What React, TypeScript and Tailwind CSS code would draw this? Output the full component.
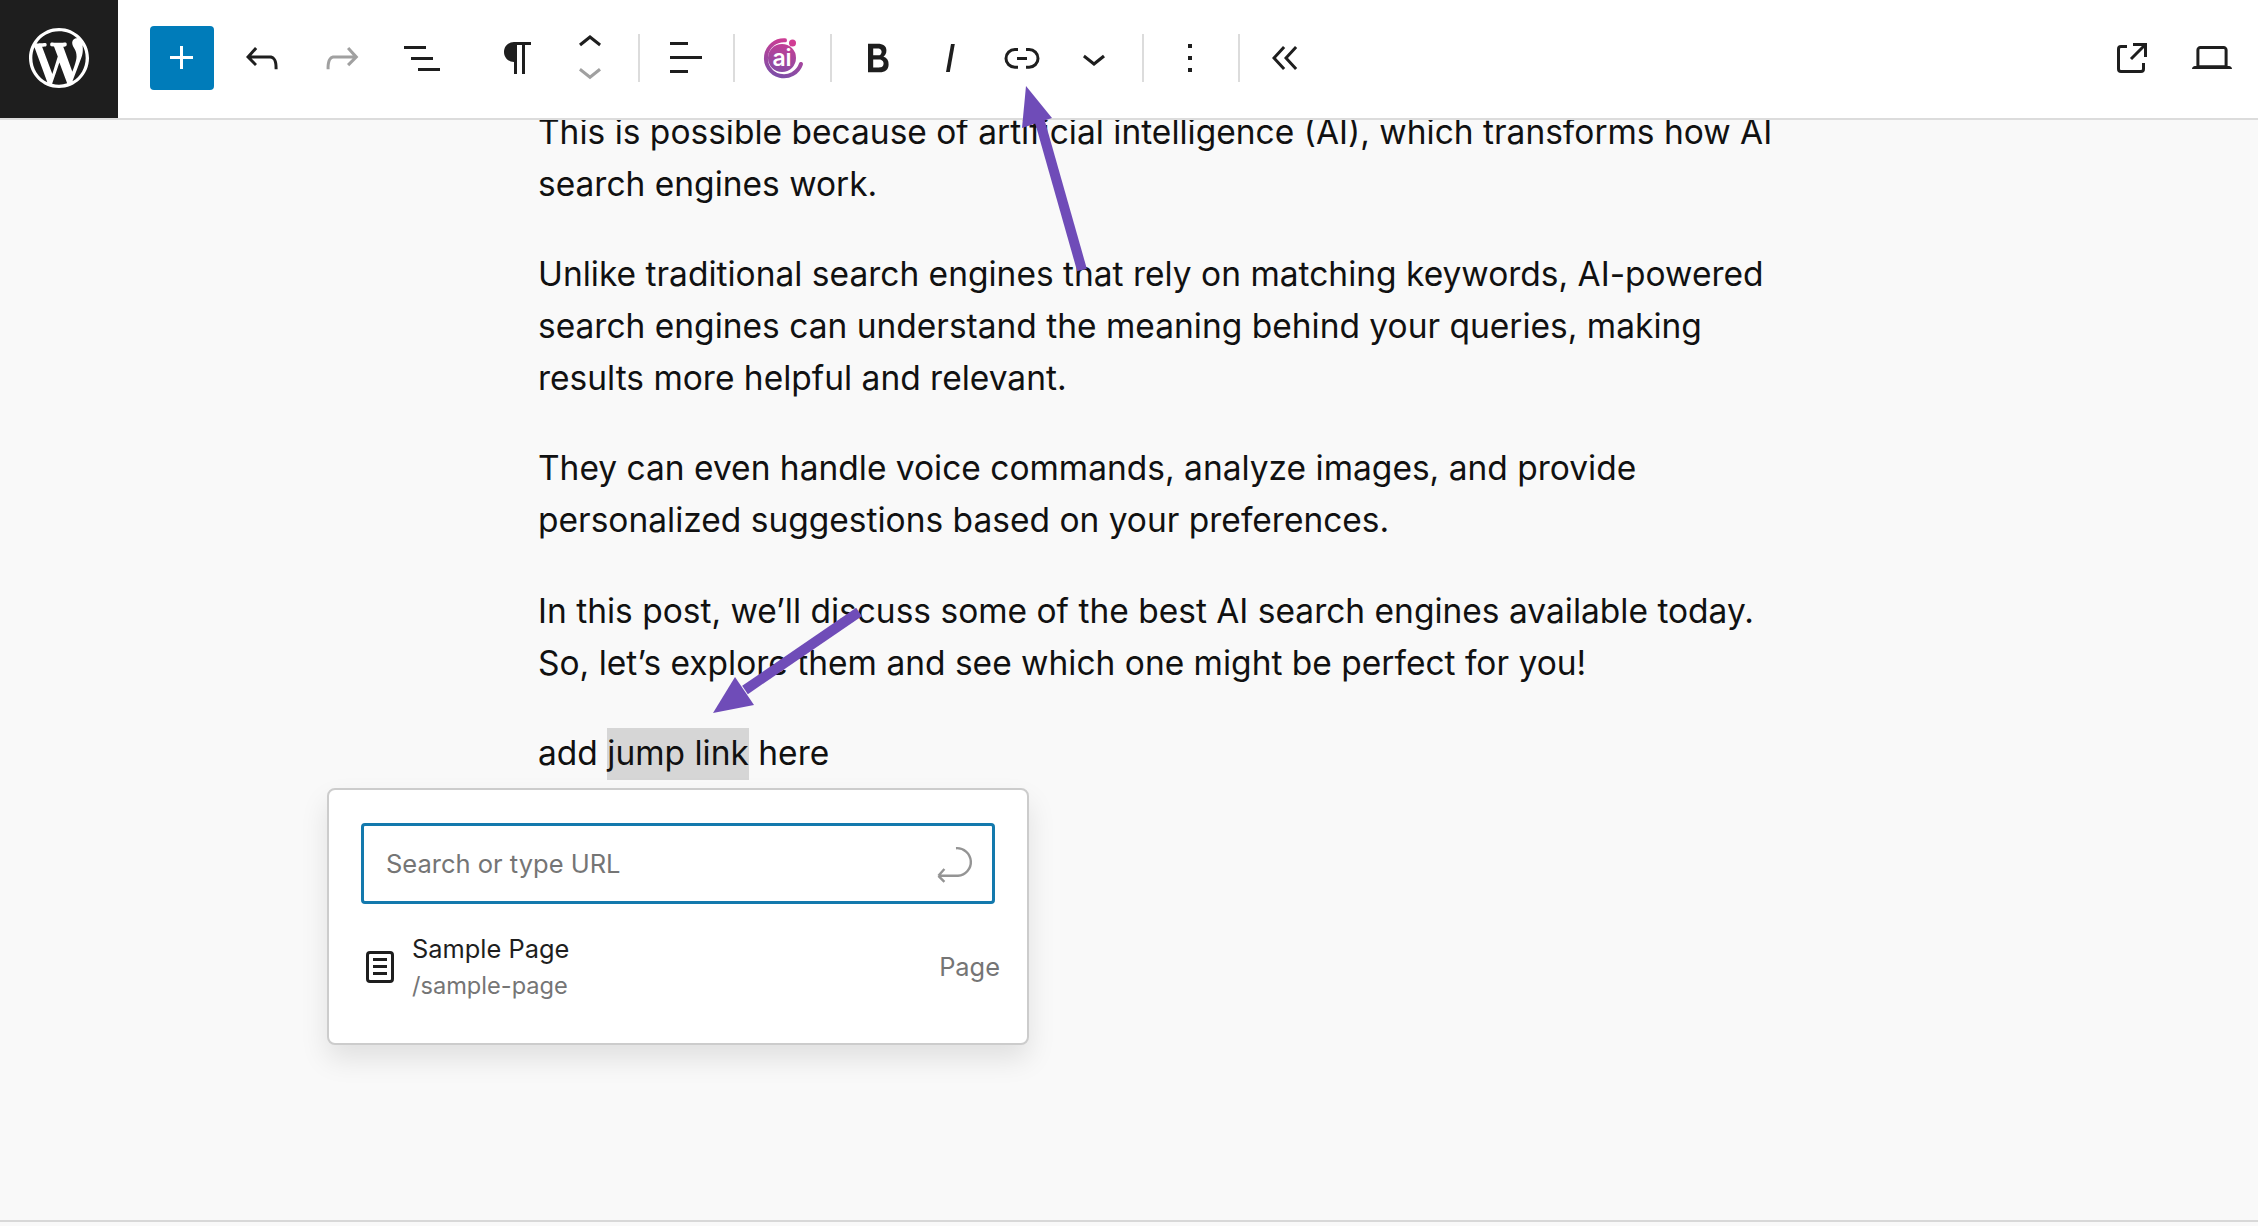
const PATHS = {
  plus: "M11 12.5V17.5H12.5V12.5H17.5V11H12.5V6H11V11H6V12.5H11Z",
  undo: "M18.3 11.7c-.6-.6-1.4-.9-2.3-.9H6.7l2.9-3.3-1.1-1-4.5 5L8.5 16l1-1-2.7-2.7H16c.5 0 .9.2 1.3.5 1 1 1 3.4 1 4.5v.3h1.5v-.2c0-1.5 0-4.3-1.5-5.7z",
  redo: "M15.6 6.5l-1.1 1 2.9 3.3H8c-.9 0-1.7.3-2.3.9-1.4 1.5-1.4 4.2-1.4 5.7v.2h1.5v-.3c0-1.1 0-3.5 1-4.5.3-.3.7-.5 1.3-.5h9.2L14.5 15l1.1 1.1 4.6-4.6-4.6-5z",
  list: "M3 6h11v1.5H3V6Zm3.5 5.5h11V13h-11v-1.5ZM21 17H10v1.5h11V17Z",
  para: "m9.99609 14v-.2251l.00391.0001v6.225h1.5v-14.5h2.5v14.5h1.5v-14.5h3v-1.5h-8.50391c-2.76142 0-5 2.23858-5 5 0 2.7614 2.23858 5 5 5z",
  align: "M13 5.5H4V4h9v1.5Zm7 7H4V11h16v1.5Zm-7 7H4V18h9v1.5Z",
  bold: "M14.7 11.3c1-.6 1.5-1.6 1.5-3 0-2.3-1.5-3.4-4.5-3.4H7v14.2h5.8c1.4 0 2.5-.3 3.3-1 .8-.7 1.2-1.7 1.2-2.9.1-1.9-.8-3.3-2.6-3.9zm-5.1-4h2.3c.6 0 1.1.1 1.4.4.3.3.5.7.5 1.2s-.2 1-.5 1.3c-.3.3-.8.4-1.4.4H9.6V7.3zm4.6 9c-.4.3-1 .4-1.7.4H9.6v-3.9h2.9c.7 0 1.3.2 1.7.6.4.4.6.8.6 1.4 0 .6-.2 1.1-.6 1.5z",
  italic: "M12.5 5L10 19h1.9l2.5-14z",
  link: "M10 17.389H8.444A5.194 5.194 0 1 1 8.444 7H10v1.5H8.444a3.694 3.694 0 0 0 0 7.389H10v1.5ZM14 7h1.556a5.194 5.194 0 0 1 0 10.39H14v-1.5h1.556a3.694 3.694 0 0 0 0-7.39H14V7Zm-4.5 6h5v-1.5h-5V13Z",
  down: "M17.5 11.6L12 16l-5.5-4.4.9-1.2L12 14l4.5-3.6 1 1.2z",
  up: "M6.5 12.4L12 8l5.5 4.4-.9 1.2L12 10l-4.5 3.6-1-1.2z",
  more: "M13 19h-2v-2h2v2zm0-6h-2v-2h2v2zm0-6h-2V5h2v2z",
  collapse: "M11.6 7l-1.1-1L5 12l5.5 6 1.1-1L7 12l4.6-5zm6 0l-1.1-1-5.5 6 5.5 6 1.1-1-4.6-5 4.6-5z",
  external: "M19.5 4.5h-7V6h4.44l-5.97 5.97 1.06 1.06L18 7.06v4.44h1.5v-7Zm-13 1a2 2 0 0 0-2 2v10a2 2 0 0 0 2 2h10a2 2 0 0 0 2-2v-3H17v3a.5.5 0 0 1-.5.5h-10a.5.5 0 0 1-.5-.5v-10a.5.5 0 0 1 .5-.5h3V5.5h-3Z",
  laptop: "M20.5 16h-.7V8c0-1.1-.9-2-2-2H6.2c-1.1 0-2 .9-2 2v8h-.7c-.8 0-1.5.7-1.5 1.5h20c0-.8-.7-1.5-1.5-1.5zM5.7 8c0-.3.2-.5.5-.5h11.6c.3 0 .5.2.5.5v7.6H5.7V8z",
  page: "M15.5 7.5h-7V9h7V7.5Zm-7 3.5h7v1.5h-7V11Zm7 3.5h-7V16h7v-1.5Z M17 4H7a2 2 0 0 0-2 2v12a2 2 0 0 0 2 2h10a2 2 0 0 0 2-2V6a2 2 0 0 0-2-2ZM7 5.5h10a.5.5 0 0 1 .5.5v12a.5.5 0 0 1-.5.5H7a.5.5 0 0 1-.5-.5V6a.5.5 0 0 1 .5-.5Z",
  wp: "M20 10c0-5.51-4.49-10-10-10C4.48 0 0 4.49 0 10c0 5.52 4.48 10 10 10 5.51 0 10-4.48 10-10zM7.78 15.37L4.37 6.22c.55-.02 1.17-.08 1.17-.08.5-.06.44-1.13-.06-1.11 0 0-1.45.11-2.37.11-.18 0-.37 0-.58-.01C4.12 2.69 6.87 1.11 10 1.11c2.33 0 4.45.87 6.05 2.34-.68-.11-1.65.39-1.65 1.58 0 .74.45 1.36.9 2.1.35.61.55 1.36.55 2.46 0 1.49-1.4 5-1.4 5l-3.03-8.37c.54-.02.82-.17.82-.17.5-.05.44-1.25-.06-1.22 0 0-1.44.12-2.38.12-.87 0-2.33-.12-2.33-.12-.5-.03-.56 1.2-.06 1.22l.92.08 1.26 3.41zM17.41 10c.24-.64.74-1.87.43-4.25.7 1.29 1.05 2.71 1.05 4.25 0 3.29-1.73 6.24-4.4 7.78.97-2.59 1.94-5.2 2.92-7.78zM6.1 18.09C3.12 16.65 1.11 13.53 1.11 10c0-1.3.23-2.48.72-3.59C3.25 10.3 4.67 14.2 6.1 18.09zm4.03-6.63l2.58 6.98c-.86.29-1.76.45-2.71.45-.79 0-1.57-.11-2.29-.33.81-2.38 1.62-4.74 2.42-7.1z",
};

function Icon({ d, className = "" }: { d: string; className?: string }) {
  return (
    <svg viewBox="0 0 24 24" className={`h-12 w-12 shrink-0 fill-current ${className}`}>
      <path d={d} />
    </svg>
  );
}

function Sep({ className = "" }: { className?: string }) {
  return <div className={`h-12 w-[2px] shrink-0 bg-[#dcdcdc] ${className}`} />;
}

function AiLogo({ className = "" }: { className?: string }) {
  return (
    <div className={`relative flex h-12 w-12 shrink-0 items-center justify-center ${className}`}>
      <svg viewBox="0 0 48 48" className="absolute inset-0 h-12 w-12">
        <defs>
          <linearGradient id="aig" gradientUnits="userSpaceOnUse" x1="30" y1="4" x2="20" y2="44">
            <stop offset="0" stopColor="#d13c93" />
            <stop offset="1" stopColor="#7a4fa8" />
          </linearGradient>
        </defs>
        <path
          d="M27 6.3A18 18 0 1 0 43 30"
          fill="none"
          stroke="url(#aig)"
          strokeWidth="4"
          strokeLinecap="round"
        />
        <circle cx="24" cy="24" r="14" fill="url(#aig)" />
        <circle cx="34.5" cy="9" r="3.5" fill="#d13c93" />
      </svg>
      <span className="relative font-['Inter',sans-serif] text-[23px] leading-none font-semibold text-white">ai</span>
    </div>
  );
}

export default function App() {
  return (
    <div className="relative flex h-[1226px] w-[2258px] flex-col overflow-hidden bg-[#f9f9f9] font-['Inter',sans-serif] text-[#111111]">
      <header className="relative z-10 flex h-[120px] shrink-0 border-b-2 border-[#dcdcdc] bg-white text-[#1e1e1e]">
        <div className="flex h-[118px] w-[118px] shrink-0 items-center justify-center bg-[#1e1e1e] pb-[2px] text-white">
          <svg viewBox="0 0 20 20" className="h-[60px] w-[60px] fill-current">
            <path d={PATHS.wp} />
          </svg>
        </div>
        <div className="flex h-[116px] flex-1 items-center">
          <div className="ml-8 flex h-16 w-16 shrink-0 items-center justify-center rounded-[4px] bg-[#007cba] text-white">
            <Icon d={PATHS.plus} />
          </div>
          <Icon d={PATHS.undo} className="ml-6" />
          <Icon d={PATHS.redo} className="ml-8 text-[#a0a0a0]" />
          <Icon d={PATHS.list} className="ml-8" />
          <Icon d={PATHS.para} className="ml-12" />
          <svg viewBox="0 0 24 48" className="-my-6 ml-6 h-24 w-12 shrink-0">
            <path d={PATHS.up} transform="translate(0 4.5)" fill="#1e1e1e" />
            <path d={PATHS.down} transform="translate(0 18.6)" fill="#a0a0a0" />
          </svg>
          <Sep className="ml-6" />
          <Icon d={PATHS.align} className="ml-[22px]" />
          <Sep className="ml-[23px]" />
          <AiLogo className="ml-[23px]" />
          <Sep className="ml-6" />
          <Icon d={PATHS.bold} className="ml-[22px]" />
          <Icon d={PATHS.italic} className="ml-6" />
          <Icon d={PATHS.link} className="ml-6" />
          <Icon d={PATHS.down} className="ml-6" />
          <Sep className="ml-6" />
          <Icon d={PATHS.more} className="ml-[22px]" />
          <Sep className="ml-6" />
          <Icon d={PATHS.collapse} className="ml-[22px]" />
          <Icon d={PATHS.external} className="ml-auto" />
          <Icon d={PATHS.laptop} className="ml-8 mr-[22px]" />
        </div>
      </header>

      <main className="relative mb-[4px] flex-1 overflow-hidden border-b-2 border-[#d8d8d8]">
        <div className="-mt-[13px] ml-[538px] w-[1240px] text-[33.5px] leading-[51.84px] font-normal [&>p]:mb-[38.6px]">
          <p>This is possible because of artificial intelligence (AI), which transforms how AI search engines work.</p>
          <p>Unlike traditional search engines that rely on matching keywords, AI-powered search engines can understand the meaning behind your queries, making results more helpful and relevant.</p>
          <p>They can even handle voice commands, analyze images, and provide personalized suggestions based on your preferences.</p>
          <p>In this post, we’ll discuss some of the best AI search engines available today. So, let’s explore them and see which one might be perfect for you!</p>
          <p>add <span className="inline-block bg-[#d6d6d6]">jump link</span> here</p>
        </div>

        <div className="absolute top-[668px] left-[327px] flex h-[257px] w-[702px] flex-col rounded-[8px] border-2 border-[#cccccc] bg-white px-[32px] pt-[33px] shadow-[0_14px_28px_rgba(0,0,0,0.10)]">
          <div className="flex h-[81px] items-center justify-between rounded-[4px] border-[3px] border-[#1379ad] pr-[16px] pl-[22px]">
            <span className="pt-[1px] text-[25.5px] text-[#757575]">Search or type URL</span>
            <svg viewBox="0 0 24 24" className="-mt-[2px] h-12 w-12 text-[#949494]" fill="none" stroke="currentColor" strokeWidth="1.2">
              <path d="M14 4.6a6.9 6.9 0 0 1 1 13.8H5.2M5.2 18.4l3-3.4M5.2 18.4l3 3" />
            </svg>
          </div>
          <div className="mt-[26px] flex items-center">
            <svg viewBox="0 0 24 24" className="-ml-[5px] h-12 w-12 shrink-0 fill-[#1e1e1e]">
              <path d={PATHS.page} />
            </svg>
            <div className="ml-[8px] flex flex-1 flex-col">
              <span className="text-[25.4px] leading-[37px] text-[#1e1e1e]">Sample Page</span>
              <span className="text-[23.6px] leading-[37px] text-[#757575]">/sample-page</span>
            </div>
            <span className="-mr-[5px] text-[25.4px] text-[#757575]">Page</span>
          </div>
        </div>
      </main>

      <svg viewBox="0 0 2258 1226" className="pointer-events-none absolute inset-0 z-20 h-[1226px] w-[2258px]">
        <path d="M1082 270 L1038 115" stroke="#6f4cb8" strokeWidth="10" fill="none" />
        <path d="M1026 86 L1052 118 L1022 128 Z" fill="#6f4cb8" />
        <path d="M859 612 L745 690" stroke="#6f4cb8" strokeWidth="10" fill="none" />
        <path d="M713 713 L735 677 L754 705 Z" fill="#6f4cb8" />
      </svg>
    </div>
  );
}
